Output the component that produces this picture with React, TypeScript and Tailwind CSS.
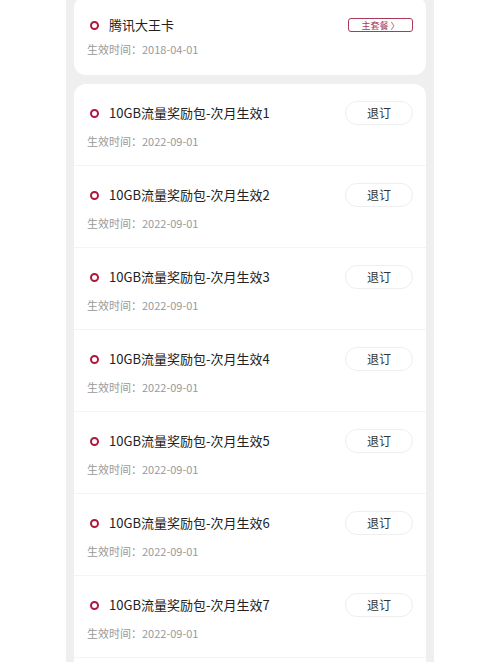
import React from 'react';

const addons = [1, 2, 3, 4, 5, 6, 7];

const Dot = () => (
  <span className="w-[9px] h-[9px] rounded-full border-[2px] border-[#b3163f] shrink-0" />
);

export default function App() {
  return (
    <div className="w-[500px] h-[666px] bg-white overflow-hidden" style={{ fontFamily: '"Noto Sans CJK SC", "Noto Sans", sans-serif' }}>
      <div className="mx-[66px] h-full bg-[#efefef] px-2">
        {/* main plan card */}
        <div className="-mt-1 bg-white rounded-xl px-[13px] pt-[19px] pb-[18px]">
          <div className="flex items-center h-5">
            <div className="flex items-center gap-[10px] pl-[3px] flex-1">
              <Dot />
              <span className="text-[13px] text-[#222]">腾讯大王卡</span>
            </div>
            <span className="h-[14px] w-[65px] border border-[#a83a5a] rounded-[3px] flex items-center justify-center text-[9px] leading-none text-[#a83a5a]">
              主套餐 〉
            </span>
          </div>
          <div className="mt-[6px] text-[11px] leading-4 text-[#999]">生效时间：2018-04-01</div>
        </div>

        {/* add-on list */}
        <div className="mt-[9px] bg-white rounded-t-xl min-h-[600px]">
          {addons.map((n) => (
            <div key={n} className="px-[13px] pt-[19px] pb-[16px] border-b border-[#f4f4f4]">
              <div className="flex items-center h-5">
                <div className="flex items-center gap-[10px] pl-[3px] flex-1">
                  <Dot />
                  <span className="text-[13px] text-[#222]">10GB流量奖励包-次月生效{n}</span>
                </div>
                <button className="h-6 w-[68px] rounded-full border border-[#eeeeee] text-[12px] text-[#333] flex items-center justify-center">
                  退订
                </button>
              </div>
              <div className="mt-[10px] text-[11px] leading-4 text-[#999]">生效时间：2022-09-01</div>
            </div>
          ))}
        </div>
      </div>
    </div>
  );
}
